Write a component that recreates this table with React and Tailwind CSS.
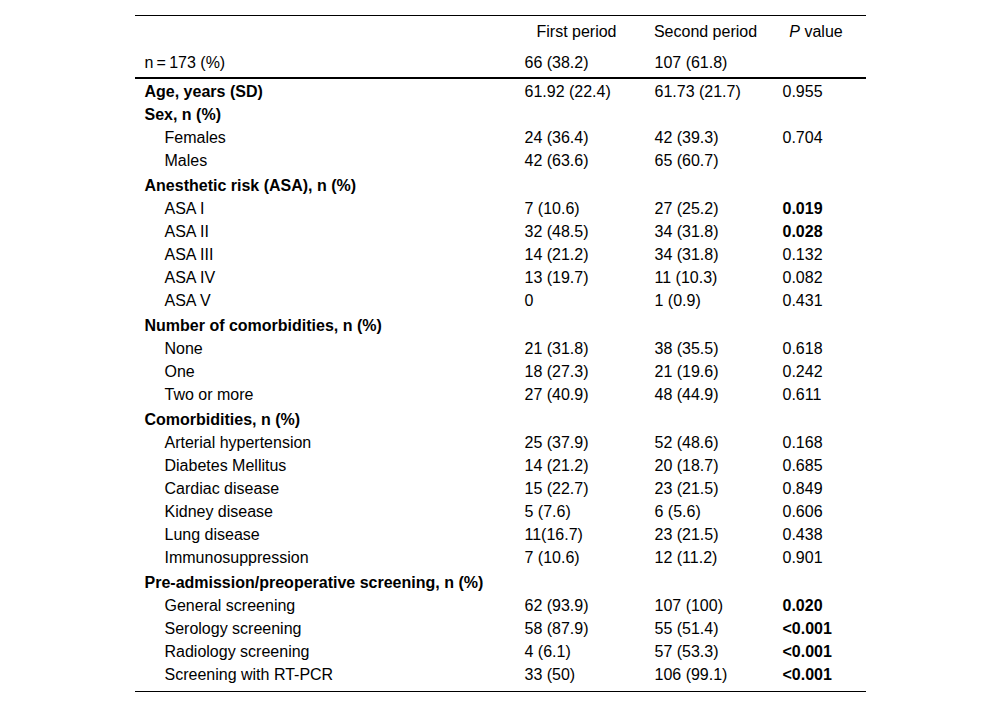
import React from "react";

const rows = [
  { t: "Age, years (SD)", b: true, a: "61.92 (22.4)", s: "61.73 (21.7)", p: "0.955", first: true },
  { t: "Sex, n (%)", b: true, cat: true, nogap: true },
  { t: "Females", a: "24 (36.4)", s: "42 (39.3)", p: "0.704" },
  { t: "Males", a: "42 (63.6)", s: "65 (60.7)" },
  { t: "Anesthetic risk (ASA), n (%)", b: true, cat: true },
  { t: "ASA I", a: "7 (10.6)", s: "27 (25.2)", p: "0.019", pb: true },
  { t: "ASA II", a: "32 (48.5)", s: "34 (31.8)", p: "0.028", pb: true },
  { t: "ASA III", a: "14 (21.2)", s: "34 (31.8)", p: "0.132" },
  { t: "ASA IV", a: "13 (19.7)", s: "11 (10.3)", p: "0.082" },
  { t: "ASA V", a: "0", s: "1 (0.9)", p: "0.431" },
  { t: "Number of comorbidities, n (%)", b: true, cat: true },
  { t: "None", a: "21 (31.8)", s: "38 (35.5)", p: "0.618" },
  { t: "One", a: "18 (27.3)", s: "21 (19.6)", p: "0.242" },
  { t: "Two or more", a: "27 (40.9)", s: "48 (44.9)", p: "0.611" },
  { t: "Comorbidities, n (%)", b: true, cat: true },
  { t: "Arterial hypertension", a: "25 (37.9)", s: "52 (48.6)", p: "0.168" },
  { t: "Diabetes Mellitus", a: "14 (21.2)", s: "20 (18.7)", p: "0.685" },
  { t: "Cardiac disease", a: "15 (22.7)", s: "23 (21.5)", p: "0.849" },
  { t: "Kidney disease", a: "5 (7.6)", s: "6 (5.6)", p: "0.606" },
  { t: "Lung disease", a: "11(16.7)", s: "23 (21.5)", p: "0.438" },
  { t: "Immunosuppression", a: "7 (10.6)", s: "12 (11.2)", p: "0.901" },
  { t: "Pre-admission/preoperative screening, n (%)", b: true, cat: true },
  { t: "General screening", a: "62 (93.9)", s: "107 (100)", p: "0.020", pb: true },
  { t: "Serology screening", a: "58 (87.9)", s: "55 (51.4)", p: "<0.001", pb: true },
  { t: "Radiology screening", a: "4 (6.1)", s: "57 (53.3)", p: "<0.001", pb: true },
  { t: "Screening with RT-PCR", a: "33 (50)", s: "106 (99.1)", p: "<0.001", pb: true, last: true },
];

const grid = "grid grid-cols-[380px_130px_128px_93px]";

export default function App() {
  return (
    <div
      className="w-[1000px] h-[707px] bg-white text-black text-[16px] leading-[18px]"
      style={{ fontFamily: '"Liberation Sans", Arial, sans-serif' }}
    >
      <div className="w-[731px] mx-auto pt-[15px]">
        <div className="border-t border-black">
          <div className={`${grid} h-[31px] items-center`}>
            <div />
            <div className="text-center pr-[6px]">First period</div>
            <div className="text-center pr-[6px]">Second period</div>
            <div className="text-center pr-[6px]"><i>P</i> value</div>
          </div>
          <div className={`${grid} h-[30px] pt-[2px] items-center`}>
            <div className="pl-[10px]">n{"\u2009"}={"\u2009"}173 (%)</div>
            <div className="pl-[10px]">66 (38.2)</div>
            <div className="pl-[10px]">107 (61.8)</div>
            <div />
          </div>
        </div>
        <div className="border-t-2 border-b border-black">
          {rows.map((r, i) => {
            const h = r.last
              ? "h-[29px] pt-[2px] pb-[6px]"
              : r.cat && !r.nogap
              ? "h-[25px] pt-[4px]"
              : "h-[23px] pt-[2px]";
            return (
              <div key={i} className={`${grid} ${h} items-center`}>
                <div className={r.b ? "pl-[10px] font-bold" : "pl-[30px]"}>{r.t}</div>
                <div className="pl-[10px]">{r.a}</div>
                <div className="pl-[10px]">{r.s}</div>
                <div className={r.pb ? "pl-[10px] font-bold" : "pl-[10px]"}>{r.p}</div>
              </div>
            );
          })}
        </div>
      </div>
    </div>
  );
}
